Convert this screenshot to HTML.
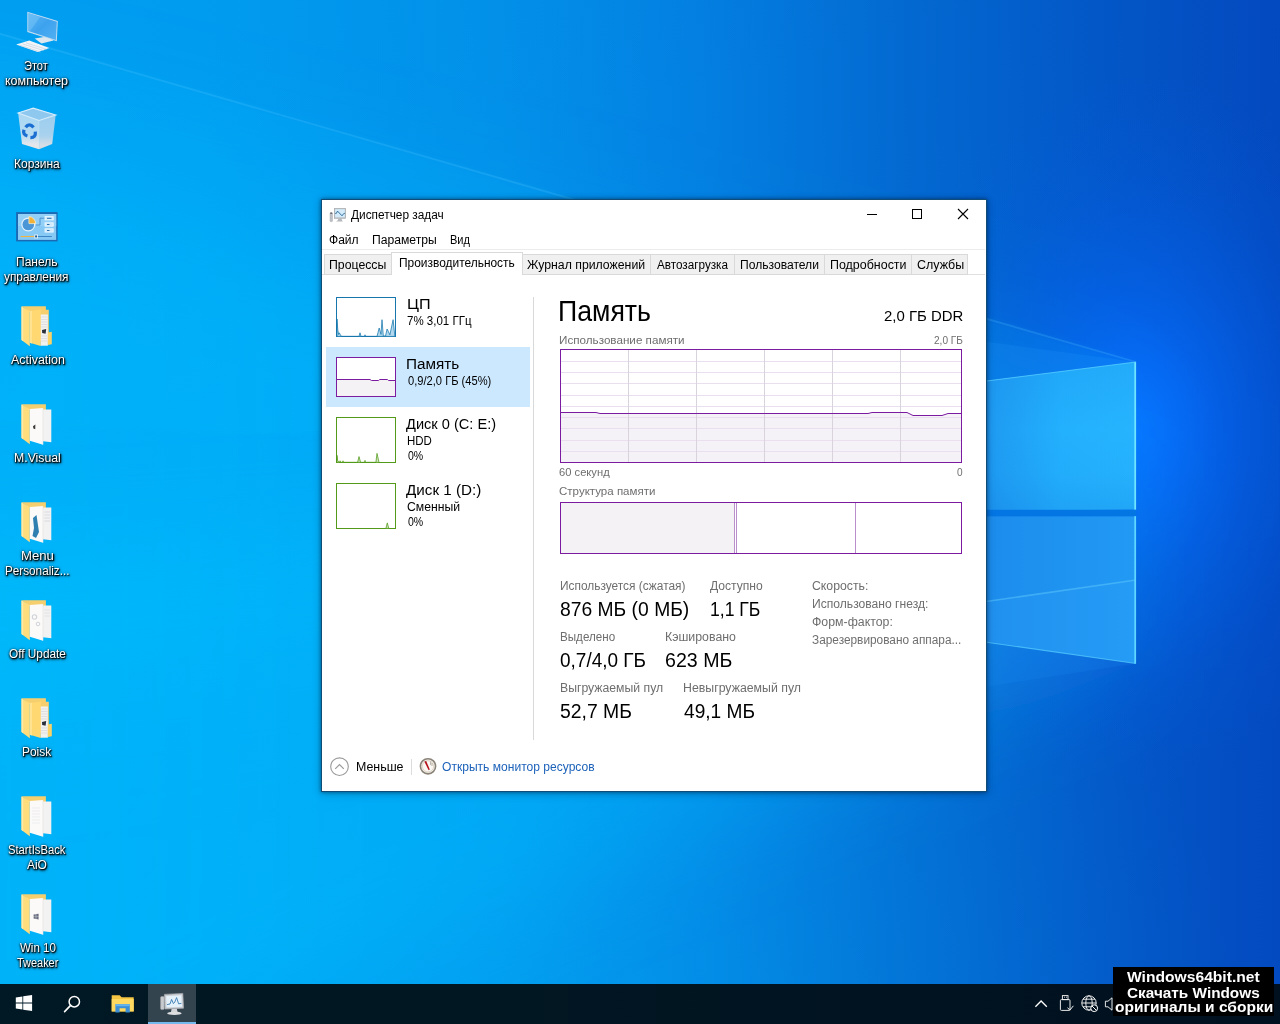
<!DOCTYPE html>
<html lang="ru">
<head>
<meta charset="utf-8">
<title>Диспетчер задач</title>
<style>
html,body{margin:0;padding:0;}
body{width:1280px;height:1024px;overflow:hidden;position:relative;background:#0078d7;font-family:"Liberation Sans",sans-serif;font-size:12px;color:#000;}
.a{position:absolute;}
.t{position:absolute;white-space:nowrap;line-height:1;transform-origin:0 0;}
#wall{position:absolute;left:0;top:0;width:1280px;height:1024px;}
.dl{position:absolute;white-space:nowrap;line-height:1;transform-origin:0 0;color:#fff;font-size:12px;text-shadow:1px 1px 1px rgba(0,0,0,.95),0 1px 2px rgba(0,0,0,.95),0 0 3px rgba(0,0,0,.75),1px 2px 3px rgba(0,0,0,.6);}
#taskbar{position:absolute;left:0;top:984px;width:1280px;height:40px;background:linear-gradient(90deg,#011924 0%,#011722 40%,#011220 75%,#01101e 100%);}
#win{position:absolute;left:321px;top:199px;width:664px;height:591px;background:#fff;border:1px solid #0f4d78;box-shadow:0 0 4px rgba(0,15,40,.55),0 2px 9px rgba(0,0,0,.18);}
.tab{position:absolute;top:254px;height:21px;background:#f0f0f0;border:1px solid #d9d9d9;box-sizing:border-box;}
.gl{position:absolute;background:#e6dcec;}
</style>
</head>
<body>
<svg id="wall" viewBox="0 0 1280 1024">
<defs>
<linearGradient id="bgx" x1="0" y1="0" x2="1280" y2="0" gradientUnits="userSpaceOnUse">
<stop offset="0" stop-color="#00a0f3"/>
<stop offset="0.156" stop-color="#009ef2"/>
<stop offset="0.39" stop-color="#0292eb"/>
<stop offset="0.547" stop-color="#0381e3"/>
<stop offset="0.703" stop-color="#036bd3"/>
<stop offset="0.859" stop-color="#0358c8"/>
<stop offset="1" stop-color="#034ac0"/>
</linearGradient>
<linearGradient id="bgy" x1="0" y1="0" x2="0" y2="1024" gradientUnits="userSpaceOnUse">
<stop offset="0" stop-color="#001060" stop-opacity="0.015"/>
<stop offset="0.35" stop-color="#001060" stop-opacity="0"/>
<stop offset="1" stop-color="#00c8ff" stop-opacity="0"/>
</linearGradient>
<radialGradient id="bl" cx="400" cy="1100" r="850" gradientUnits="userSpaceOnUse">
<stop offset="0" stop-color="#00c8ff" stop-opacity="0.30"/>
<stop offset="1" stop-color="#00c8ff" stop-opacity="0"/>
</radialGradient>
<linearGradient id="beam" x1="0" y1="0" x2="1136" y2="0" gradientUnits="userSpaceOnUse">
<stop offset="0" stop-color="#00c4ff" stop-opacity="0.44"/>
<stop offset="0.45" stop-color="#00bcff" stop-opacity="0.38"/>
<stop offset="0.8" stop-color="#10b0ff" stop-opacity="0.30"/>
<stop offset="1" stop-color="#20a8ff" stop-opacity="0.25"/>
</linearGradient>
<radialGradient id="glow" cx="0" cy="0" r="1" gradientUnits="userSpaceOnUse" gradientTransform="translate(1136 430) scale(250 360)">
<stop offset="0" stop-color="#0672ff" stop-opacity="1"/>
<stop offset="0.12" stop-color="#066eff" stop-opacity="0.88"/>
<stop offset="0.4" stop-color="#0566f8" stop-opacity="0.5"/>
<stop offset="0.7" stop-color="#0560f0" stop-opacity="0.18"/>
<stop offset="1" stop-color="#0558e0" stop-opacity="0"/>
</radialGradient>
<linearGradient id="paneT" x1="986" y1="0" x2="1136" y2="0" gradientUnits="userSpaceOnUse">
<stop offset="0" stop-color="#1e9af2"/>
<stop offset="0.5" stop-color="#23b0fd"/>
<stop offset="1" stop-color="#26b4fe"/>
</linearGradient>
<linearGradient id="paneTy" x1="0" y1="362" x2="0" y2="510" gradientUnits="userSpaceOnUse">
<stop offset="0" stop-color="#0a60d0" stop-opacity="0.10"/>
<stop offset="0.45" stop-color="#0a60d0" stop-opacity="0"/>
<stop offset="0.75" stop-color="#0a60d0" stop-opacity="0.04"/>
<stop offset="1" stop-color="#0a60d0" stop-opacity="0.16"/>
</linearGradient>
<linearGradient id="paneB" x1="986" y1="0" x2="1136" y2="0" gradientUnits="userSpaceOnUse">
<stop offset="0" stop-color="#1c8cec"/>
<stop offset="1" stop-color="#229af4"/>
</linearGradient>
<filter id="b12" x="-20%" y="-20%" width="140%" height="140%"><feGaussianBlur stdDeviation="12"/></filter>
<filter id="b3" x="-5%" y="-5%" width="110%" height="110%"><feGaussianBlur stdDeviation="2.5"/></filter>
<filter id="b70" x="-30%" y="-40%" width="160%" height="180%"><feGaussianBlur stdDeviation="75"/></filter>
<filter id="b40" x="-30%" y="-30%" width="160%" height="160%"><feGaussianBlur stdDeviation="45"/></filter>
<filter id="b1" x="-20%" y="-20%" width="140%" height="140%"><feGaussianBlur stdDeviation="0.7"/></filter>
</defs>
<rect width="1280" height="1024" fill="url(#bgx)"/>
<rect width="1280" height="1024" fill="url(#bgy)"/>
<rect width="1280" height="1024" fill="url(#bl)"/>
<rect x="880" y="40" width="400" height="800" fill="url(#glow)"/>
<polygon points="1136,400 -140,120 -140,700 1136,540" fill="url(#beam)" filter="url(#b70)"/>
<polygon points="1136,362 -60,16 -60,420 1136,470" fill="#00c0ff" fill-opacity="0.11" filter="url(#b3)"/>
<polygon points="1136,480 -120,560 -120,1160 1136,663" fill="url(#beam)" filter="url(#b40)"/>
<line x1="1136" y1="362" x2="-10" y2="31" stroke="#58c8ff" stroke-opacity="0.22" stroke-width="1.8" filter="url(#b1)"/>
<polygon points="900,330 1136,362 900,392" fill="#2aa0ff" fill-opacity="0.16"/>
<polygon points="900,630 1136,663.5 900,700" fill="#2aa0ff" fill-opacity="0.12"/>
<!-- logo panes -->
<polygon points="900,392 1136,362 1136,509.6 900,512" fill="url(#paneT)"/>
<polygon points="900,392 1136,362 1136,509.6 900,512" fill="url(#paneTy)"/>
<polygon points="900,516.2 1136,516.2 1136,663.5 900,630" fill="url(#paneB)"/>
<polygon points="900,613.8 1136,580 1136,663.5 900,630" fill="#3aa8ff" fill-opacity="0.16"/>
<line x1="900" y1="613.8" x2="1136" y2="580" stroke="#6fd6ff" stroke-opacity="0.4" stroke-width="1.6" filter="url(#b1)"/>
<rect x="900" y="509.8" width="236" height="6.4" fill="#0476e4"/>
<line x1="1135.2" y1="362" x2="1135.2" y2="509.6" stroke="#6fe4ff" stroke-width="1.8"/>
<line x1="1135.2" y1="516.2" x2="1135.2" y2="663.5" stroke="#5fd6ff" stroke-width="1.8"/>
<line x1="900" y1="392" x2="1136" y2="362" stroke="#58d0ff" stroke-opacity="0.8" stroke-width="1.2"/>
<line x1="900" y1="630" x2="1136" y2="663.5" stroke="#58d0ff" stroke-opacity="0.7" stroke-width="1.2"/>
</svg>

<svg class="a" style="left:0;top:0" width="80" height="60" viewBox="0 0 80 60">
<defs><linearGradient id="scr" x1="0" y1="0" x2="1" y2="1"><stop offset="0" stop-color="#59b6f5"/><stop offset="0.5" stop-color="#3da2ee"/><stop offset="1" stop-color="#52b0f3"/></linearGradient></defs>
<polygon points="34.7,38.6 47,36.6 53.6,40.4 41.5,43.6" fill="#dfe7ee"/>
<polygon points="27.3,11.7 57.8,21 56.8,41.2 27.3,31.9" fill="#c3dcf0"/>
<polygon points="28.3,13.1 56.8,21.8 55.9,39.9 28.3,31.1" fill="url(#scr)"/>
<polygon points="28.5,13.4 40,17 30,31.3 28.5,30.8" fill="#8fd0fa" fill-opacity="0.35"/>
<polygon points="16.1,44.6 29.3,40.5 49.3,47.9 37.6,51.9" fill="#f2f5f8"/>
<path d="M19.5,45.1 L40.5,52 M22.8,44 L43.6,50.5 M26,42.9 L46.5,49.3" stroke="#c5d3de" stroke-width="0.7" fill="none"/>
</svg>
<svg class="a" style="left:0;top:96px" width="80" height="60" viewBox="0 96 80 60">
<defs><linearGradient id="binl" x1="0" y1="0" x2="0" y2="1"><stop offset="0" stop-color="#a9d7f3"/><stop offset="0.62" stop-color="#b7dcf2"/><stop offset="0.85" stop-color="#e2e6ec"/><stop offset="1" stop-color="#e9e6e4"/></linearGradient>
<linearGradient id="binr" x1="0" y1="0" x2="0" y2="1"><stop offset="0" stop-color="#9ccdee"/><stop offset="0.6" stop-color="#a8d2ee"/><stop offset="0.88" stop-color="#d6dde6"/><stop offset="1" stop-color="#dcdad9"/></linearGradient></defs>
<polygon points="18.1,113.1 33.2,108.2 55.7,115 39.1,120.4" fill="#8ec8ee"/>
<polygon points="18.1,113.1 39.1,120.4 39.1,149.3 22,143.9" fill="url(#binl)"/>
<polygon points="39.1,120.4 55.7,115 52.2,143.9 39.1,149.3" fill="url(#binr)"/>
<path d="M18.1,113.1 L33.2,108.2 L55.7,115 L39.1,120.4 Z" fill="none" stroke="#d9eefb" stroke-width="1.1"/>
<path d="M39.1,120.4 V149" stroke="#cfe6f6" stroke-width="0.6"/>
<g fill="none" stroke="#1b6fd2" stroke-width="3.3">
<path d="M25.6,127.2 Q29.2,122.4 33.6,127.4"/>
<path d="M35.3,131.6 Q36,137.8 30.4,137.6"/>
<path d="M24,129.8 Q22.4,134.6 27.4,136"/>
</g>
</svg>
<svg class="a" style="left:0;top:194px" width="80" height="60" viewBox="0 194 80 60">
<rect x="16.1" y="212.1" width="41.5" height="29.3" fill="#1b69b3"/>
<rect x="18" y="214" width="38.2" height="25.9" fill="#86c9f5"/>
<rect x="18" y="214" width="38.2" height="12" fill="#93d0f7"/>
<circle cx="28.3" cy="224.5" r="6.4" fill="#4a96d6" stroke="#e8f4fd" stroke-width="1.1"/>
<path d="M28.9,223.6 V216.6 A7,7 0 0 1 35.6,223.6 Z" fill="#f2b23a" stroke="#fff4d6" stroke-width="0.7"/>
<path d="M35.8,225 H40 V218.2 H44.9" fill="none" stroke="#3d86c6" stroke-width="0.8"/>
<g fill="#cfe9fb" stroke="#f2faff" stroke-width="0.8"><rect x="45" y="216.6" width="8.2" height="3.3"/><rect x="45" y="222.8" width="8.2" height="3.4"/><rect x="45" y="228.8" width="8.2" height="3.3"/></g>
<path d="M47,218.3 H51.5 M47,224.5 H49.5 M47,230.5 H49.5" stroke="#2a6eb0" stroke-width="1"/>
<path d="M20.5,236.5 H34" stroke="#f0b545" stroke-width="1.1"/>
<path d="M37.5,236.5 H51.8" stroke="#3d86c6" stroke-width="1"/>
<rect x="34.7" y="235" width="2.9" height="2.9" fill="#25618f" stroke="#f4fbff" stroke-width="0.8"/>
</svg>
<svg class="a" style="left:0;top:292px" width="80" height="60" viewBox="0 0 80 60">
<polygon points="21.5,14.2 45.9,14.2 45.9,17.8 48.8,17.8 48.8,50 40.5,50 29.8,20" fill="#f5ce6e"/>
<polygon points="21.5,14.4 29.8,19 29.8,54.2 21.5,47.9" fill="#ffdc7c"/>
<polygon points="21.5,14.4 23.2,15.3 23.2,49.2 21.5,47.9" fill="#ffe9a6"/>
<polygon points="29.8,19 40.8,17.4 40.8,53.9 29.8,50.8" fill="#ffd872"/>
<polygon points="29.8,19 32,18.7 32,51.4 29.8,50.8" fill="#ffe292"/>
<rect x="40.8" y="22.5" width="7.1" height="31.2" fill="#f3f1ee"/>
<path d="M41,25 H47.5 M41,27.5 H47.5 M41,30 H47.5 M41,32.5 H47.5 M41,35 H47.5 M41,44 H47.5 M41,46.5 H47.5 M41,49 H47.5" stroke="#d6d6dc" stroke-width="0.7"/>
<path d="M42,38 L46.2,37 L45.6,41.8 L42.2,41 Z" fill="#2b2f3a"/>
<polygon points="47.9,40.5 51.8,39.8 51.8,52.2 47.9,53" fill="#fbd266"/>
</svg>
<svg class="a" style="left:0;top:390px" width="80" height="60" viewBox="0 0 80 60">
<polygon points="21.5,14.2 45.9,14.2 45.9,20 29.8,20" fill="#f5ce6e"/>
<polygon points="21.5,14.4 29.8,19 29.8,54.2 21.5,47.9" fill="#ffdc7c"/>
<polygon points="21.5,14.4 23.2,15.3 23.2,49.2 21.5,47.9" fill="#ffe9a6"/>
<polygon points="43,19.5 51.3,19.5 51.3,52.2 43,51.3" fill="#f3f2f2"/>
<polygon points="29.8,19 43,18.1 43,54.7 29.8,50.8" fill="#fbfaf9"/>
<path d="M43,18.1 V54.7" stroke="#e2e0de" stroke-width="0.6"/>
<path d="M33,36.2 L35.4,34.6 L35.2,39.2 L33.4,38.4 Z" fill="#3a3a3a"/>
</svg>
<svg class="a" style="left:0;top:488px" width="80" height="60" viewBox="0 0 80 60">
<polygon points="21.5,14.2 45.9,14.2 45.9,20 29.8,20" fill="#f5ce6e"/>
<polygon points="21.5,14.4 29.8,19 29.8,54.2 21.5,47.9" fill="#ffdc7c"/>
<polygon points="21.5,14.4 23.2,15.3 23.2,49.2 21.5,47.9" fill="#ffe9a6"/>
<polygon points="43,19.5 51.3,19.5 51.3,52.2 43,51.3" fill="#f3f2f2"/>
<polygon points="29.8,19 43,18.1 43,54.7 29.8,50.8" fill="#fbfaf9"/>
<path d="M43,18.1 V54.7" stroke="#e2e0de" stroke-width="0.6"/>
<path d="M33,30 L36.5,27 L37.5,34 L39,44 L36,50 L32.5,48 L34,40 Z" fill="#2f7fb0"/><path d="M44.5,24 H50 M44.5,27 H50 M44.5,30 H50 M44.5,33 H50" stroke="#cfcfd4" stroke-width="0.7"/>
</svg>
<svg class="a" style="left:0;top:586px" width="80" height="60" viewBox="0 0 80 60">
<polygon points="21.5,14.2 45.9,14.2 45.9,20 29.8,20" fill="#f5ce6e"/>
<polygon points="21.5,14.4 29.8,19 29.8,54.2 21.5,47.9" fill="#ffdc7c"/>
<polygon points="21.5,14.4 23.2,15.3 23.2,49.2 21.5,47.9" fill="#ffe9a6"/>
<polygon points="43,19.5 51.3,19.5 51.3,52.2 43,51.3" fill="#f3f2f2"/>
<polygon points="29.8,19 43,18.1 43,54.7 29.8,50.8" fill="#fbfaf9"/>
<path d="M43,18.1 V54.7" stroke="#e2e0de" stroke-width="0.6"/>
<circle cx="34.5" cy="31" r="2.2" fill="none" stroke="#cfd2d8" stroke-width="1.1"/><circle cx="38" cy="38" r="1.8" fill="none" stroke="#cfd2d8" stroke-width="1"/><path d="M44.5,24 H50 M44.5,27 H50 M44.5,30 H50" stroke="#dcdce0" stroke-width="0.7"/>
</svg>
<svg class="a" style="left:0;top:684px" width="80" height="60" viewBox="0 0 80 60">
<polygon points="21.5,14.2 45.9,14.2 45.9,17.8 48.8,17.8 48.8,50 40.5,50 29.8,20" fill="#f5ce6e"/>
<polygon points="21.5,14.4 29.8,19 29.8,54.2 21.5,47.9" fill="#ffdc7c"/>
<polygon points="21.5,14.4 23.2,15.3 23.2,49.2 21.5,47.9" fill="#ffe9a6"/>
<polygon points="29.8,19 40.8,17.4 40.8,53.9 29.8,50.8" fill="#ffd872"/>
<polygon points="29.8,19 32,18.7 32,51.4 29.8,50.8" fill="#ffe292"/>
<rect x="40.8" y="22.5" width="7.1" height="31.2" fill="#f3f1ee"/>
<path d="M41,25 H47.5 M41,27.5 H47.5 M41,30 H47.5 M41,32.5 H47.5 M41,35 H47.5 M41,44 H47.5 M41,46.5 H47.5 M41,49 H47.5" stroke="#d6d6dc" stroke-width="0.7"/>
<path d="M42,38 L46.2,37 L45.6,41.8 L42.2,41 Z" fill="#2b2f3a"/>
<polygon points="47.9,40.5 51.8,39.8 51.8,52.2 47.9,53" fill="#fbd266"/>
</svg>
<svg class="a" style="left:0;top:782px" width="80" height="60" viewBox="0 0 80 60">
<polygon points="21.5,14.2 45.9,14.2 45.9,20 29.8,20" fill="#f5ce6e"/>
<polygon points="21.5,14.4 29.8,19 29.8,54.2 21.5,47.9" fill="#ffdc7c"/>
<polygon points="21.5,14.4 23.2,15.3 23.2,49.2 21.5,47.9" fill="#ffe9a6"/>
<polygon points="43,19.5 51.3,19.5 51.3,52.2 43,51.3" fill="#f3f2f2"/>
<polygon points="29.8,19 43,18.1 43,54.7 29.8,50.8" fill="#fbfaf9"/>
<path d="M43,18.1 V54.7" stroke="#e2e0de" stroke-width="0.6"/>
<path d="M32,26 H40 M32,29 H40 M32,32 H40 M32,35 H40 M32,38 H40 M32,41 H40" stroke="#e6e6ea" stroke-width="0.7"/>
</svg>
<svg class="a" style="left:0;top:880px" width="80" height="60" viewBox="0 0 80 60">
<polygon points="21.5,14.2 45.9,14.2 45.9,20 29.8,20" fill="#f5ce6e"/>
<polygon points="21.5,14.4 29.8,19 29.8,54.2 21.5,47.9" fill="#ffdc7c"/>
<polygon points="21.5,14.4 23.2,15.3 23.2,49.2 21.5,47.9" fill="#ffe9a6"/>
<polygon points="43,19.5 51.3,19.5 51.3,52.2 43,51.3" fill="#f3f2f2"/>
<polygon points="29.8,19 43,18.1 43,54.7 29.8,50.8" fill="#fbfaf9"/>
<path d="M43,18.1 V54.7" stroke="#e2e0de" stroke-width="0.6"/>
<path d="M33.6,34.6 L35.8,34.2 V36.4 H33.6 Z M36.2,34.1 L38.6,33.7 V36.4 H36.2 Z M33.6,36.8 H35.8 V39 L33.6,38.6 Z M36.2,36.8 H38.6 V39.5 L36.2,39.1 Z" fill="#6a6f80"/>
</svg>

<!-- TASKBAR -->
<div id="taskbar"></div>
<!-- start -->
<svg class="a" style="left:14px;top:993px" width="20" height="20" viewBox="0 0 20 20">
<path d="M1.8,4.4 L8.4,3.4 V9.6 H1.8 Z M9.2,3.3 L18.1,2 V9.6 H9.2 Z M1.8,10.4 H8.4 V16.6 L1.8,15.6 Z M9.2,10.4 H18.1 V18 L9.2,16.7 Z" fill="#fff"/>
</svg>
<!-- search -->
<svg class="a" style="left:60px;top:992px" width="24" height="24" viewBox="0 0 24 24">
<circle cx="14.3" cy="9.7" r="5.2" fill="none" stroke="#fff" stroke-width="1.5"/>
<path d="M10.6,13.4 L4.6,19.6" stroke="#fff" stroke-width="1.6" stroke-linecap="round"/>
</svg>
<!-- explorer -->
<svg class="a" style="left:110px;top:992px" width="26" height="24" viewBox="0 0 26 24">
<path d="M1.7,3.2 H9.6 L11.6,5.2 H23.7 V19.4 H1.7 Z" fill="#f4c644"/>
<path d="M1.7,7 H23.7 V19.4 H1.7 Z" fill="#ffd960"/>
<path d="M5.4,12.2 H19.8 V20.4 H15.6 V16.2 H9.6 V20.4 H5.4 Z" fill="#3b8fd6"/>
<path d="M5.4,12.2 H19.8 V14.2 H5.4 Z" fill="#64b4ee"/>
</svg>
<!-- active task button -->
<div class="a" style="left:148px;top:984px;width:48px;height:40px;background:#34444f"></div>
<div class="a" style="left:148px;top:1022px;width:48px;height:2px;background:#76b9ed"></div>
<svg class="a" style="left:158px;top:991px" width="28" height="26" viewBox="0 0 28 26">
<rect x="2.6" y="5.6" width="3.6" height="13" rx="1" fill="#c8cbcf" stroke="#9fa3a8" stroke-width="0.6"/>
<path d="M6.4,3.4 L24.8,2.4 L25.6,17.2 L7,18 Z" fill="#c9cdd1" stroke="#a7abb0" stroke-width="0.7"/>
<path d="M8.2,5 L23.4,4.2 L24,15.8 L8.6,16.4 Z" fill="#e4f1fb"/>
<path d="M9,13.6 L12,13 L13.6,8.4 L15.4,12.6 L16.8,11 L18.6,6.6 L20.6,12.8 L23.4,12.4" fill="none" stroke="#3a7bb0" stroke-width="0.9"/>
<path d="M13.6,18 L18.8,17.8 L19.4,20.6 L23.4,22.2 L9.6,22.8 L13,21 Z" fill="#d3d5d8"/>
<ellipse cx="16.4" cy="22.4" rx="7.2" ry="1.6" fill="#dcdee0"/>
</svg>
<!-- tray -->
<svg class="a" style="left:1030px;top:990px" width="90" height="30" viewBox="1030 990 90 30">
<polyline points="1035.4,1006.8 1041.1,1001 1046.8,1006.8" fill="none" stroke="#fff" stroke-width="1.3"/>
<g fill="none" stroke="#f0f0f0" stroke-width="0.95">
<rect x="1062.4" y="995.6" width="5.6" height="4"/>
<rect x="1060.4" y="999.6" width="9.6" height="10.8" rx="1"/>
<polyline points="1067.6,1007.6 1069.8,1010.2 1073.4,1005.8" stroke-width="1"/>
</g>
<path d="M1064,997.2 h0.9 M1066,997.2 h0.9" stroke="#fff" stroke-width="0.9"/>
<g fill="none" stroke="#f0f0f0" stroke-width="0.95">
<circle cx="1089" cy="1003" r="7.2"/>
<ellipse cx="1089" cy="1003" rx="3.2" ry="7.2"/>
<path d="M1081.8,1003 H1096.2 M1083,999.2 H1095 M1083,1006.8 H1092"/>
</g>
<circle cx="1094.2" cy="1008.2" r="3.4" fill="#01111f" stroke="#fff" stroke-width="1"/>
<path d="M1092,1006 L1096.4,1010.4" stroke="#fff" stroke-width="1"/>
<path d="M1105.4,1001.2 H1108 L1112,997.8 V1010.2 L1108,1006.8 H1105.4 Z" fill="none" stroke="#f0f0f0" stroke-width="0.95"/>
</svg>
<!-- watermark -->
<div class="a" style="left:1113px;top:967px;width:161px;height:49px;background:#000"></div>


<!-- WINDOW -->
<div id="win"></div>
<!-- title icon -->
<svg class="a" style="left:329px;top:207px" width="18" height="16" viewBox="0 0 18 16">
<rect x="1.1" y="5.8" width="2.3" height="8.8" rx="0.5" fill="#bfc3c8" stroke="#9da1a6" stroke-width="0.5"/>
<rect x="1.3" y="5.6" width="1.9" height="1.1" fill="#4a4c50"/>
<rect x="5" y="1.1" width="11.9" height="10.5" fill="#bcc0c4"/>
<rect x="5.4" y="1.5" width="11.1" height="9.7" fill="none" stroke="#a5a9ad" stroke-width="0.5"/>
<rect x="6.1" y="2.2" width="9.7" height="8.1" fill="#d3ebfa"/>
<polyline points="6.2,6.4 7.3,6.4 8.5,4.1 13,8.8 14.9,6.4 15.8,6.4" fill="none" stroke="#2c6a98" stroke-width="0.95"/>
<path d="M9.6 11.6 L12.4 11.6 L13 13.3 L13.9 14.6 L7.1 14.6 L8.8 13.3 Z" fill="#b4b8bc"/>
</svg>
<!-- window controls -->
<div class="a" style="left:867px;top:214px;width:10px;height:1px;background:#000"></div>
<div class="a" style="left:912px;top:209px;width:10px;height:10px;border:1px solid #000;box-sizing:border-box"></div>
<svg class="a" style="left:957px;top:208px" width="12" height="12" viewBox="0 0 12 12"><path d="M1 1 L11 11 M11 1 L1 11" stroke="#000" stroke-width="1.1" fill="none"/></svg>
<!-- menu underline -->
<div class="a" style="left:322px;top:249px;width:663px;height:1px;background:#ececec"></div>
<!-- tabs -->
<div class="a" style="left:322px;top:274px;width:663px;height:1px;background:#e0e0e0"></div>
<div class="tab" style="left:324px;width:68px"></div>
<div class="tab" style="left:522px;width:129px"></div>
<div class="tab" style="left:650px;width:85px"></div>
<div class="tab" style="left:734px;width:91px"></div>
<div class="tab" style="left:824px;width:88px"></div>
<div class="tab" style="left:911px;width:57px"></div>
<div class="a" style="left:391px;top:252px;width:132px;height:23px;background:#fff;border:1px solid #d9d9d9;border-bottom:none;box-sizing:border-box"></div>
<!-- left list -->
<div class="a" style="left:326px;top:347px;width:204px;height:60px;background:#cce8ff"></div>
<!-- cpu mini -->
<svg class="a" style="left:336px;top:297px" width="60" height="40" viewBox="0 0 60 40">
<rect x="0.5" y="0.5" width="59" height="39" fill="#fff" stroke="#1577ad"/>
<path d="M1 39.4 L1 22 L1.8 33 L2.6 37.5 L3.3 35.8 L4.4 37.8 L5.5 39.4 L23 39.4 L24 35.8 L25 39.4 L28.5 39.4 L29 37.8 L29.5 39.4 L41 39.4 L43.2 31 L45 37.4 L46 22.7 L47.3 39 L49.5 39 L51.1 32 L53.9 37.8 L57.1 22.7 L58.8 39 L59 39.4 Z" fill="#b4d9ee" stroke="#1577ad" stroke-width="0.75" stroke-linejoin="round"/>
</svg>
<!-- mem mini -->
<svg class="a" style="left:336px;top:357px" width="60" height="40" viewBox="0 0 60 40">
<rect x="0.5" y="0.5" width="59" height="39" fill="#fff" stroke="#7a1ba0"/>
<path d="M1 22.5 L34 22.5 L35.5 23.5 L42.6 23.5 L43.7 22.5 L51.4 22.5 L52.5 23.5 L59 23.5 L59 39 L1 39 Z" fill="#f4f2f4"/>
<path d="M1 22.5 L34 22.5 L35.5 23.5 L42.6 23.5 L43.7 22.5 L51.4 22.5 L52.5 23.5 L59 23.5" fill="none" stroke="#7a1ba0" stroke-width="1"/>
</svg>
<!-- disk0 mini -->
<svg class="a" style="left:336px;top:417px" width="60" height="46" viewBox="0 0 60 46">
<rect x="0.5" y="0.5" width="59" height="45" fill="#fff" stroke="#529a18"/>
<path d="M1 45.4 L1 38.3 L1.6 43.5 L3.6 45.4 L4.1 43.8 L4.6 45.4 L6.6 45.4 L7 43.8 L7.4 45.4 L21.6 45.4 L23 39.6 L24.6 45.4 L28.6 45.4 L29 43.4 L29.4 45.4 L39.9 45.4 L41 36.4 L43 45.4 Z" fill="#cfe5bf" stroke="#529a18" stroke-width="0.75"/>
</svg>
<!-- disk1 mini -->
<svg class="a" style="left:336px;top:483px" width="60" height="46" viewBox="0 0 60 46">
<rect x="0.5" y="0.5" width="59" height="45" fill="#fff" stroke="#529a18"/>
<path d="M49.9 45.4 L51.3 39.9 L52.8 45.4 Z" fill="#cfe5bf" stroke="#529a18" stroke-width="0.75"/>
</svg>
<!-- divider -->
<div class="a" style="left:533px;top:297px;width:1px;height:443px;background:#d9d9d9"></div>
<!-- main graph -->
<svg class="a" style="left:560px;top:349px" width="402" height="114" viewBox="0 0 402 114">
<rect x="0.5" y="0.5" width="401" height="113" fill="#fff"/>
<path d="M1 63.5 L36 63.5 L40 64.5 L308 64.5 L312 63.5 L347 63.5 L353 66.5 L382 66.5 L388 64.5 L401 64.5 L401 113 L1 113 Z" fill="#f4f1f7"/>
<g stroke="#e9dfef" stroke-width="1">
<path d="M1 12.5 H401 M1 23.5 H401 M1 34.5 H401 M1 46.5 H401 M1 57.5 H401 M1 68.5 H401 M1 79.5 H401 M1 91.5 H401 M1 102.5 H401"/>
</g>
<g stroke="#d9d3de" stroke-width="1">
<path d="M68.5 1 V113 M136.5 1 V113 M204.5 1 V113 M272.5 1 V113 M340.5 1 V113"/>
</g>
<path d="M1 63.5 L36 63.5 L40 64.5 L308 64.5 L312 63.5 L347 63.5 L353 66.5 L382 66.5 L388 64.5 L401 64.5" fill="none" stroke="#7a1ba0" stroke-width="1"/>
<rect x="0.5" y="0.5" width="401" height="113" fill="none" stroke="#7a1ba0"/>
</svg>
<!-- composition -->
<svg class="a" style="left:560px;top:502px" width="402" height="52" viewBox="0 0 402 52">
<rect x="0.5" y="0.5" width="401" height="51" fill="#fff"/>
<rect x="1" y="1" width="173" height="50" fill="#f4f2f4"/>
<path d="M174.5 1 V51 M176.5 1 V51 M295.5 1 V51" stroke="#b98fcb" stroke-width="1"/>
<rect x="0.5" y="0.5" width="401" height="51" fill="none" stroke="#7a1ba0"/>
</svg>
<!-- footer icons -->
<svg class="a" style="left:329px;top:756px" width="22" height="22" viewBox="0 0 22 22">
<circle cx="10.5" cy="10.7" r="8.8" fill="#fff" stroke="#9a9a9a" stroke-width="1.1"/>
<polyline points="6.2,12.8 10.5,8.5 14.8,12.8" fill="none" stroke="#9a9a9a" stroke-width="1.2"/>
</svg>
<div class="a" style="left:411px;top:759px;width:1px;height:16px;background:#dcdcdc"></div>
<svg class="a" style="left:418px;top:756px" width="20" height="20" viewBox="0 0 20 20">
<circle cx="10" cy="10.3" r="7.6" fill="#f4efe8" stroke="#8a8378" stroke-width="1.6"/>
<circle cx="10" cy="10.3" r="5.6" fill="#fbf8f3" stroke="#d8cfc2" stroke-width="0.8"/>
<path d="M6.4 5.6 L8.2 5 L11.8 13.6 L10.6 14.2 Z" fill="#b5121b"/>
<path d="M12.6 5.4 V9 M14 7 V10" stroke="#9b958b" stroke-width="0.7"/>
</svg>
<span class="t" style="left:351.10px;top:209.00px;font-size:12px;color:#000;transform:scaleX(0.9882)">Диспетчер задач</span>
<span class="t" style="left:328.60px;top:234.00px;font-size:12px;color:#000;transform:scaleX(1.0036)">Файл</span>
<span class="t" style="left:371.69px;top:234.00px;font-size:12px;color:#000;transform:scaleX(1.0129)">Параметры</span>
<span class="t" style="left:449.98px;top:234.00px;font-size:12px;color:#000;transform:scaleX(0.9190)">Вид</span>
<span class="t" style="left:329.48px;top:259.00px;font-size:12px;color:#000;transform:scaleX(1.0236)">Процессы</span>
<span class="t" style="left:398.91px;top:257.00px;font-size:12px;color:#000;transform:scaleX(0.9939)">Производительность</span>
<span class="t" style="left:527.10px;top:259.00px;font-size:12px;color:#000;transform:scaleX(1.0235)">Журнал приложений</span>
<span class="t" style="left:657.40px;top:259.00px;font-size:12px;color:#000;transform:scaleX(0.9753)">Автозагрузка</span>
<span class="t" style="left:740.39px;top:259.00px;font-size:12px;color:#000;transform:scaleX(1.0078)">Пользователи</span>
<span class="t" style="left:830.16px;top:259.00px;font-size:12px;color:#000;transform:scaleX(1.0375)">Подробности</span>
<span class="t" style="left:917.06px;top:259.00px;font-size:12px;color:#000;transform:scaleX(1.0386)">Службы</span>
<span class="t" style="left:406.59px;top:296.00px;font-size:16px;color:#000;transform-origin:0 13px;transform:scale(1.0095,0.9167)">ЦП</span>
<span class="t" style="left:406.64px;top:315.00px;font-size:12px;color:#000;transform:scaleX(0.9591)">7% 3,01 ГГц</span>
<span class="t" style="left:406.24px;top:356.00px;font-size:16px;color:#000;transform-origin:0 13px;transform:scale(0.9556,0.9167)">Память</span>
<span class="t" style="left:407.60px;top:375.00px;font-size:12px;color:#000;transform:scaleX(0.9281)">0,9/2,0 ГБ (45%)</span>
<span class="t" style="left:406.40px;top:416.00px;font-size:16px;color:#000;transform-origin:0 13px;transform:scale(0.9122,0.9167)">Диск 0 (C: E:)</span>
<span class="t" style="left:406.84px;top:435.00px;font-size:12px;color:#000;transform:scaleX(0.9560)">HDD</span>
<span class="t" style="left:407.80px;top:450.00px;font-size:12px;color:#000;transform:scaleX(0.8765)">0%</span>
<span class="t" style="left:406.40px;top:482.00px;font-size:16px;color:#000;transform-origin:0 13px;transform:scale(0.9506,0.9167)">Диск 1 (D:)</span>
<span class="t" style="left:406.78px;top:501.00px;font-size:12px;color:#000;transform:scaleX(1.0176)">Сменный</span>
<span class="t" style="left:407.80px;top:516.00px;font-size:12px;color:#000;transform:scaleX(0.8765)">0%</span>
<span class="t" style="left:558.16px;top:297.00px;font-size:29px;color:#000;transform:scaleX(0.9204)">Память</span>
<span class="t" style="left:883.87px;top:308.00px;font-size:16px;color:#000;transform-origin:0 13px;transform:scale(0.9325,0.9167)">2,0 ГБ DDR</span>
<span class="t" style="left:559.44px;top:335.00px;font-size:11px;color:#6e6e6e;transform:scaleX(1.0607)">Использование памяти</span>
<span class="t" style="left:933.80px;top:335.00px;font-size:11px;color:#6e6e6e;transform:scaleX(0.9161)">2,0 ГБ</span>
<span class="t" style="left:559.48px;top:467.00px;font-size:11px;color:#6e6e6e;transform:scaleX(1.0163)">60 секунд</span>
<span class="t" style="left:956.50px;top:467.00px;font-size:11px;color:#6e6e6e;transform:scaleX(0.9167)">0</span>
<span class="t" style="left:559.45px;top:486.00px;font-size:11px;color:#6e6e6e;transform:scaleX(1.0478)">Структура памяти</span>
<span class="t" style="left:559.71px;top:580.00px;font-size:12px;color:#6e6e6e;transform:scaleX(0.9912)">Используется (сжатая)</span>
<span class="t" style="left:709.50px;top:580.00px;font-size:12px;color:#6e6e6e;transform:scaleX(1.0077)">Доступно</span>
<span class="t" style="left:559.81px;top:600.00px;font-size:19.5px;color:#000;transform:scaleX(0.9891)">876 МБ (0 МБ)</span>
<span class="t" style="left:710.30px;top:600.00px;font-size:19.5px;color:#000;transform:scaleX(0.9019)">1,1 ГБ</span>
<span class="t" style="left:559.73px;top:631.00px;font-size:12px;color:#6e6e6e;transform:scaleX(0.9696)">Выделено</span>
<span class="t" style="left:664.67px;top:631.00px;font-size:12px;color:#6e6e6e;transform:scaleX(1.0279)">Кэшировано</span>
<span class="t" style="left:559.83px;top:651.00px;font-size:19.5px;color:#000;transform:scaleX(0.9733)">0,7/4,0 ГБ</span>
<span class="t" style="left:665.00px;top:651.00px;font-size:19.5px;color:#000;transform:scaleX(1.0046)">623 МБ</span>
<span class="t" style="left:559.68px;top:682.00px;font-size:12px;color:#6e6e6e;transform:scaleX(1.0190)">Выгружаемый пул</span>
<span class="t" style="left:682.67px;top:682.00px;font-size:12px;color:#6e6e6e;transform:scaleX(1.0265)">Невыгружаемый пул</span>
<span class="t" style="left:559.81px;top:702.00px;font-size:19.5px;color:#000;transform:scaleX(0.9943)">52,7 МБ</span>
<span class="t" style="left:683.70px;top:702.00px;font-size:19.5px;color:#000;transform:scaleX(0.9803)">49,1 МБ</span>
<span class="t" style="left:811.58px;top:580.00px;font-size:12px;color:#6e6e6e;transform:scaleX(1.0226)">Скорость:</span>
<span class="t" style="left:811.59px;top:598.00px;font-size:12px;color:#6e6e6e;transform:scaleX(1.0088)">Использовано гнезд:</span>
<span class="t" style="left:811.57px;top:616.00px;font-size:12px;color:#6e6e6e;transform:scaleX(1.0273)">Форм-фактор:</span>
<span class="t" style="left:811.61px;top:634.00px;font-size:12px;color:#6e6e6e;transform:scaleX(0.9866)">Зарезервировано аппара...</span>
<span class="t" style="left:355.57px;top:761.00px;font-size:12px;color:#000;transform:scaleX(1.0333)">Меньше</span>
<span class="t" style="left:441.60px;top:761.00px;font-size:12px;color:#1c62b9;transform:scaleX(1.0053)">Открыть монитор ресурсов</span>
<span class="dl" style="left:23.98px;top:60.00px;font-size:12px;color:#fff;font-weight:400;transform:scaleX(0.9200)">Этот</span>
<span class="dl" style="left:4.86px;top:75.00px;font-size:12px;color:#fff;font-weight:400;transform:scaleX(1.0424)">компьютер</span>
<span class="dl" style="left:13.60px;top:158.00px;font-size:12px;color:#fff;font-weight:400;transform:scaleX(1.0012)">Корзина</span>
<span class="dl" style="left:15.60px;top:256.00px;font-size:12px;color:#fff;font-weight:400;transform:scaleX(1.0012)">Панель</span>
<span class="dl" style="left:4.40px;top:271.00px;font-size:12px;color:#fff;font-weight:400;transform:scaleX(0.9846)">управления</span>
<span class="dl" style="left:10.70px;top:354.00px;font-size:12px;color:#fff;font-weight:400;transform:scaleX(1.0353)">Activation</span>
<span class="dl" style="left:13.58px;top:452.00px;font-size:12px;color:#fff;font-weight:400;transform:scaleX(1.0227)">M.Visual</span>
<span class="dl" style="left:20.90px;top:550.00px;font-size:12px;color:#fff;font-weight:400;transform:scaleX(1.0964)">Menu</span>
<span class="dl" style="left:5.42px;top:565.00px;font-size:12px;color:#fff;font-weight:400;transform:scaleX(0.9766)">Personaliz...</span>
<span class="dl" style="left:8.80px;top:648.00px;font-size:12px;color:#fff;font-weight:400;transform:scaleX(0.9845)">Off Update</span>
<span class="dl" style="left:22.40px;top:746.00px;font-size:12px;color:#fff;font-weight:400;transform:scaleX(0.9964)">Poisk</span>
<span class="dl" style="left:7.86px;top:844.00px;font-size:12px;color:#fff;font-weight:400;transform:scaleX(0.9367)">StartIsBack</span>
<span class="dl" style="left:27.00px;top:859.00px;font-size:12px;color:#fff;font-weight:400;transform:scaleX(0.9950)">AiO</span>
<span class="dl" style="left:19.50px;top:942.00px;font-size:12px;color:#fff;font-weight:400;transform:scaleX(0.9595)">Win 10</span>
<span class="dl" style="left:17.00px;top:957.00px;font-size:12px;color:#fff;font-weight:400;transform:scaleX(0.9111)">Tweaker</span>
<span class="t" style="left:1126.60px;top:969.00px;font-size:15.5px;color:#fff;font-weight:700;transform:scaleX(1.0083)">Windows64bit.net</span>
<span class="t" style="left:1126.71px;top:985.00px;font-size:15.5px;color:#fff;font-weight:700;transform:scaleX(0.9895)">Скачать Windows</span>
<span class="t" style="left:1114.50px;top:999.00px;font-size:15.5px;color:#fff;font-weight:700;transform:scaleX(1.0026)">оригиналы и сборки</span>
</body>
</html>
